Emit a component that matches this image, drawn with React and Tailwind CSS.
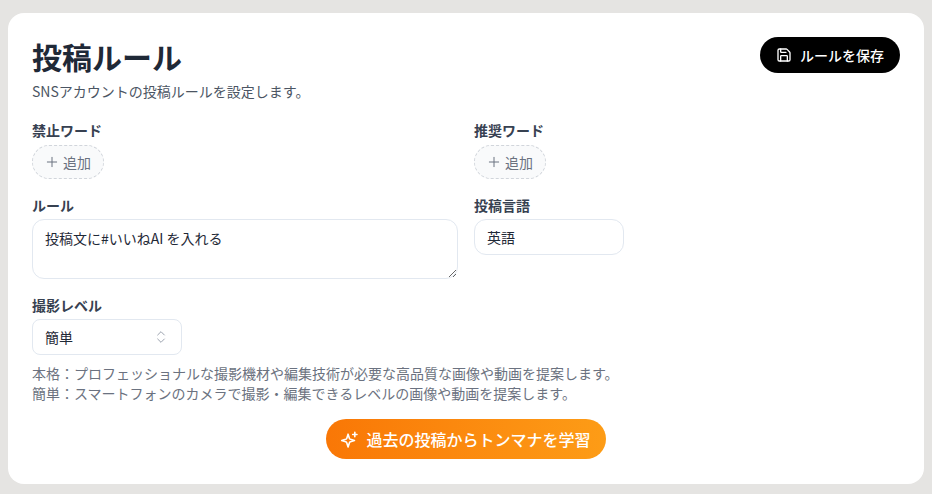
import { Save, Plus, ChevronsUpDown } from "lucide-react";

const fontStack = "font-['Noto_Sans_CJK_JP','Noto_Sans',sans-serif]";

function Label({ children }) {
  return <label className="block text-sm leading-5 font-bold text-[#374151]">{children}</label>;
}

function AddButton() {
  return (
    <button className="mt-[5px] flex h-[34px] w-[72px] items-center justify-center gap-[3px] rounded-full border border-dashed border-[#d1d5db] bg-[#f9fafb] pr-px text-sm text-[#6b7280]">
      <Plus size={16} strokeWidth={1.5} />
      追加
    </button>
  );
}

function StarPlus() {
  return (
    <svg width="17" height="17" viewBox="0 0 24 24" fill="none" stroke="currentColor" strokeWidth="2.25" strokeLinecap="round" strokeLinejoin="round">
      <path d="M10 4.5 L11.8 10.2 Q12.2 11.4 13.4 11.8 L19 13.5 L13.4 15.2 Q12.2 15.6 11.8 16.8 L10 22.5 L8.2 16.8 Q7.8 15.6 6.6 15.2 L1 13.5 L6.6 11.8 Q7.8 11.4 8.2 10.2 Z" />
      <path d="M19.5 2v6" />
      <path d="M16.5 5h6" />
    </svg>
  );
}

export default function App() {
  return (
    <div className={`min-h-screen bg-[#e5e4e2] pt-[13px] px-2 pb-[10px] ${fontStack}`}>
      <div className="h-[471px] rounded-2xl bg-white px-6 pt-6">
        <div className="flex items-start justify-between">
          <div>
            <h1 className="-mt-px text-[30px] leading-[40px] font-bold text-[#1f2937]">投稿ルール</h1>
            <p className="mt-[5px] text-sm leading-5 text-[#4b5563]">SNSアカウントの投稿ルールを設定します。</p>
          </div>
          <button className="flex h-9 w-[140px] items-center justify-center gap-2 rounded-full bg-black text-sm font-medium text-white">
            <Save size={16} strokeWidth={2} />
            ルールを保存
          </button>
        </div>

        <div className="mt-[19px] grid grid-cols-2 gap-x-4">
          <div>
            <Label>禁止ワード</Label>
            <AddButton />
          </div>
          <div>
            <Label>推奨ワード</Label>
            <AddButton />
          </div>
          <div className="mt-4">
            <Label>ルール</Label>
            <textarea
              className="mt-1 block h-[60px] w-full rounded-xl border border-[#e2e8f0] px-3 py-2 text-sm leading-5 text-[#1f2937] outline-none"
              defaultValue="投稿文に#いいねAI を入れる"
            />
          </div>
          <div className="mt-4">
            <Label>投稿言語</Label>
            <input
              className="mt-1 block h-9 w-[150px] rounded-xl border border-[#e2e8f0] px-3 text-sm text-[#1f2937] outline-none"
              defaultValue="英語"
            />
          </div>
        </div>

        <div className="mt-4">
          <Label>撮影レベル</Label>
          <button className="mt-1 flex h-9 w-[150px] items-center justify-between rounded-lg border border-[#e2e8f0] px-3 text-sm text-[#1f2937]">
            簡単
            <ChevronsUpDown size={16} strokeWidth={1.5} className="text-[#9ca3af]" />
          </button>
        </div>

        <p className="mt-2 text-sm leading-5 text-[#6b7280]">
          本格：プロフェッショナルな撮影機材や編集技術が必要な高品質な画像や動画を提案します。
          <br />
          簡単：スマートフォンのカメラで撮影・編集できるレベルの画像や動画を提案します。
        </p>

        <div className="mt-4 flex justify-center">
          <button className="flex h-10 w-[280px] items-center justify-center gap-2 rounded-full bg-gradient-to-r from-[#f97706] to-[#fd9c16] text-base font-medium text-white">
            <StarPlus />
            過去の投稿からトンマナを学習
          </button>
        </div>
      </div>
    </div>
  );
}
